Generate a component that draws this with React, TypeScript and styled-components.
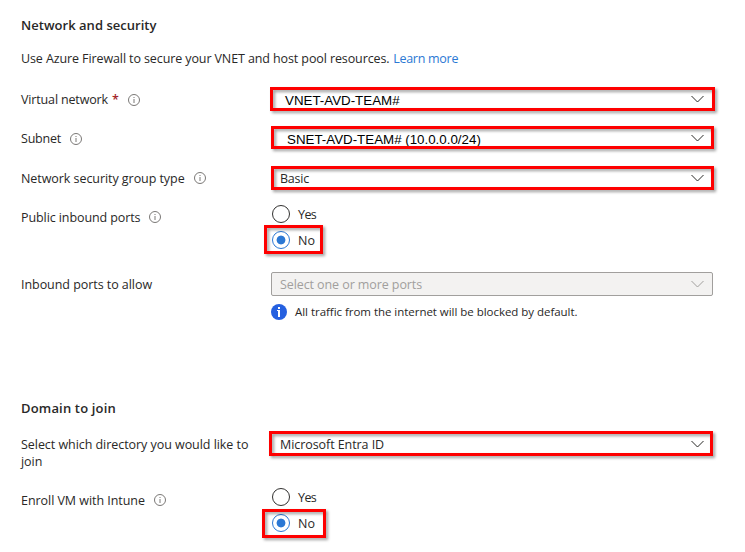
import React from 'react';
import styled, { createGlobalStyle } from 'styled-components';

const GlobalStyle = createGlobalStyle`
  * { box-sizing: border-box; }
  body {
    margin: 0;
    background: #fff;
    color: #292827;
    font-family: 'Open Sans', 'Noto Sans', sans-serif;
    font-size: 12.5px;
  }
`;

const Page = styled.main`
  width: 745px;
  height: 552px;
  padding: 15px 32px 0 21px;
  overflow: hidden;
  white-space: nowrap;
`;

const Heading = styled.h2<{ $top?: number; $spacing?: number }>`
  margin: ${(p) => p.$top ?? 0}px 0 0;
  font-size: 13px;
  font-weight: 600;
  line-height: 20px;
  letter-spacing: ${(p) => p.$spacing ?? 0}px;
`;

const Intro = styled.p`
  margin: 14px 0 0;
  line-height: 20px;
  letter-spacing: -0.105px;
`;

const Link = styled.a`
  color: #2b78d4;
  letter-spacing: -0.27px;
  margin-left: 0.5px;
`;

const FormRow = styled.div<{ $top: number }>`
  display: grid;
  grid-template-columns: 250px 442px;
  margin-top: ${(p) => p.$top}px;
`;

const Label = styled.div<{ $spacing?: number }>`
  display: flex;
  align-items: center;
  height: 24px;
  letter-spacing: ${(p) => p.$spacing ?? 0}px;
`;

const WrappedLabel = styled.div`
  padding-top: 4px;
  height: 38px;
  width: 240px;
  line-height: 17px;
  letter-spacing: -0.05px;
  white-space: normal;
`;

const Required = styled.span`
  margin-left: 4px;
  color: #a4262c;
  font-weight: 600;
`;

const InfoOutline = styled.svg<{ $low?: boolean }>`
  width: 12px;
  height: 12px;
  margin: ${(p) => (p.$low ? 2 : 0)}px 0 0 9px;
  fill: none;
  stroke: #7a7876;
`;

const Select = styled.div<{ $disabled?: boolean }>`
  position: relative;
  display: flex;
  align-items: center;
  justify-content: space-between;
  height: 24px;
  padding: 0 ${(p) => (p.$disabled ? 8 : 9)}px;
  border: ${(p) => (p.$disabled ? '1px solid #a19f9d' : '0')};
  border-radius: 2px;
  background: ${(p) => (p.$disabled ? '#f3f2f1' : '#fff')};
  color: ${(p) => (p.$disabled ? '#a19f9d' : '#292827')};
`;

const Value = styled.span<{ $spacing?: number }>`
  letter-spacing: ${(p) => p.$spacing ?? 0}px;
`;

const TypedValue = styled.span<{ $indent: number; $drop: number }>`
  padding: ${(p) => p.$drop}px 0 0 ${(p) => p.$indent}px;
  color: #000;
  font: 13.33px 'Liberation Sans', Arial, sans-serif;
`;

const ChevronIcon = styled.svg`
  width: 13px;
  height: 8px;
  fill: none;
  stroke: currentColor;
`;

/* Red annotation frame laid over the control it marks */
const Highlight = styled.span<{ $t?: number; $r?: number; $b?: number; $l?: number }>`
  position: absolute;
  top: ${(p) => p.$t ?? 0}px;
  right: ${(p) => p.$r ?? 0}px;
  bottom: ${(p) => p.$b ?? 0}px;
  left: ${(p) => p.$l ?? 0}px;
  border: 3px solid #fe0000;
  filter: drop-shadow(2.5px 2.5px 1.5px rgba(0, 0, 0, 0.38));
  pointer-events: none;
`;

const RadioGroup = styled.div`
  display: flex;
  flex-direction: column;
  align-items: flex-start;
  gap: 8px;
`;

const RadioOption = styled.div`
  position: relative;
  display: flex;
  align-items: center;
  gap: 8px;
  width: 46px;
  height: 18px;
  padding-left: 1px;
`;

const RadioText = styled.span<{ $spacing: number }>`
  padding-top: 1px;
  letter-spacing: ${(p) => p.$spacing}px;
`;

const Dot = styled.span<{ $on?: boolean }>`
  display: flex;
  flex: none;
  align-items: center;
  justify-content: center;
  width: 18px;
  height: 18px;
  border: 1px solid ${(p) => (p.$on ? '#2b78d4' : '#323130')};
  border-radius: 50%;
  background: radial-gradient(
    circle,
    ${(p) => (p.$on ? '#2b78d4' : 'transparent')} 4px,
    transparent 4.8px
  );
`;

const Note = styled.div`
  display: flex;
  align-items: center;
  gap: 8px;
  height: 16px;
  margin: 8px 0 0 250px;
  font-size: 11.5px;
  letter-spacing: -0.035px;
`;

const NoteText = styled.span`
  padding-bottom: 2px;
`;

const InfoFilled = styled.svg`
  width: 16px;
  height: 16px;
`;

const Info = ({ low }: { low?: boolean }) => (
  <InfoOutline viewBox="0 0 12 12" $low={low}>
    <circle cx="6" cy="6" r="5.5" />
    <path d="M6 5v4M6 3v1" />
  </InfoOutline>
);

const Chevron = () => (
  <ChevronIcon viewBox="0 0 13 8">
    <path d="M.5 1l6 6 6-6" />
  </ChevronIcon>
);

type Frame = { t?: number; r?: number; b?: number; l?: number };

const YesNo = ({ frame }: { frame: Frame }) => (
  <RadioGroup>
    <RadioOption>
      <Dot />
      <RadioText $spacing={-0.6}>Yes</RadioText>
    </RadioOption>
    <RadioOption>
      <Dot $on />
      <RadioText $spacing={0}>No</RadioText>
      <Highlight $t={frame.t} $r={frame.r} $b={frame.b} $l={frame.l} />
    </RadioOption>
  </RadioGroup>
);

export default function App() {
  return (
    <Page>
      <GlobalStyle />
      <Heading $spacing={0.03}>Network and security</Heading>
      <Intro>
        Use Azure Firewall to secure your VNET and host pool resources. <Link>Learn more</Link>
      </Intro>

      <FormRow $top={18}>
        <Label $spacing={-0.15}>
          Virtual network<Required>*</Required>
          <Info low />
        </Label>
        <Select>
          <TypedValue $indent={5} $drop={2}>VNET-AVD-TEAM#</TypedValue>
          <Chevron />
          <Highlight $l={-1} $r={-2} />
        </Select>
      </FormRow>

      <FormRow $top={15}>
        <Label $spacing={-0.22}>
          Subnet
          <Info low />
        </Label>
        <Select>
          <TypedValue $indent={7} $drop={3}>SNET-AVD-TEAM# (10.0.0.0/24)</TypedValue>
          <Chevron />
          <Highlight $r={-1} $b={1} />
        </Select>
      </FormRow>

      <FormRow $top={16}>
        <Label $spacing={-0.06}>
          Network security group type
          <Info />
        </Label>
        <Select>
          <Value $spacing={-0.22}>Basic</Value>
          <Chevron />
          <Highlight $r={-1} />
        </Select>
      </FormRow>

      <FormRow $top={15}>
        <Label $spacing={-0.09}>
          Public inbound ports
          <Info />
        </Label>
        <YesNo frame={{ t: -6, r: -6, b: -5, l: -7 }} />
      </FormRow>

      <FormRow $top={23}>
        <Label $spacing={-0.05}>Inbound ports to allow</Label>
        <Select $disabled>
          <Value $spacing={-0.09}>Select one or more ports</Value>
          <Chevron />
        </Select>
      </FormRow>
      <Note>
        <InfoFilled viewBox="0 0 16 16">
          <circle cx="8" cy="8" r="8" fill="#2560e0" />
          <path d="M7 3h2v2H7zM6 6h3v7H7V7H6z" fill="#fff" />
        </InfoFilled>
        <NoteText>All traffic from the internet will be blocked by default.</NoteText>
      </Note>

      <Heading $top={78} $spacing={0.17}>Domain to join</Heading>
      <FormRow $top={14}>
        <WrappedLabel>Select which directory you would like to join</WrappedLabel>
        <Select>
          <Value $spacing={-0.07}>Microsoft Entra ID</Value>
          <Chevron />
          <Highlight $t={-1} $l={-2} />
        </Select>
      </FormRow>

      <FormRow $top={18}>
        <Label $spacing={-0.05}>
          Enroll VM with Intune
          <Info />
        </Label>
        <YesNo frame={{ t: -5, r: -9, b: -6, l: -9 }} />
      </FormRow>
    </Page>
  );
}
